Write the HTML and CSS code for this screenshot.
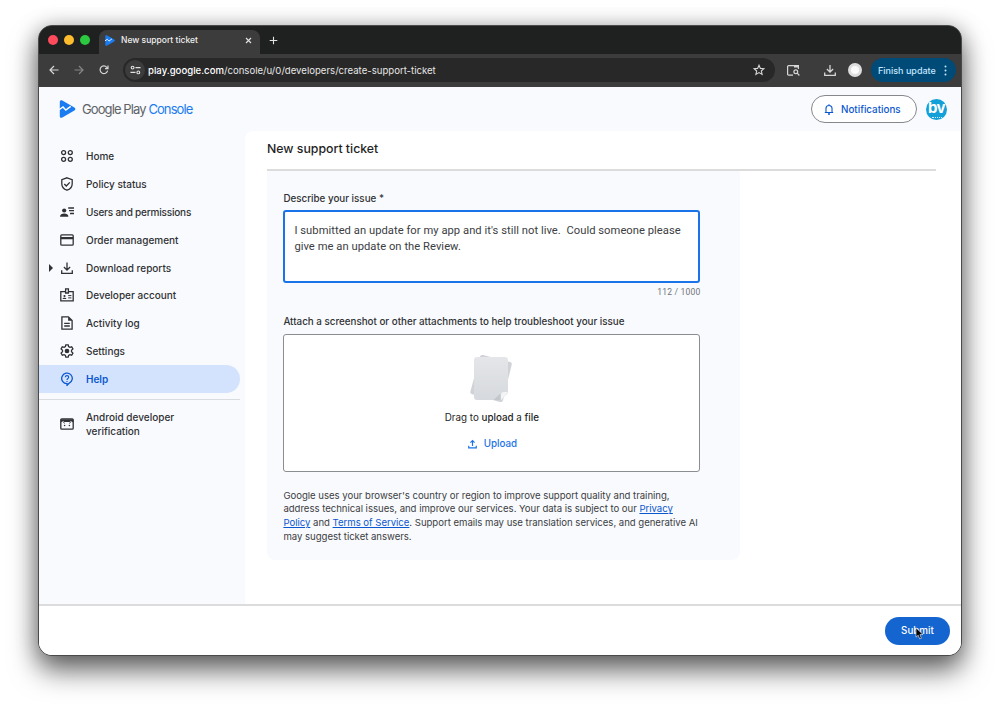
FILE: index.html
```html
<!DOCTYPE html>
<html lang="en">
<head>
    <meta charset="UTF-8">
    <meta name="viewport" content="width=device-width, initial-scale=1.0">
    <title>New support ticket</title>
    <link rel="stylesheet" href="styles.css">
</head>
<body>
    <!-- shared logo shape -->
    <svg width="0" height="0" class="defs">
        <symbol id="console-logo" viewBox="0 0 16 18">
            <path fill="#1a7cf0" d="M0.3 1.8C.3.4 1.6-.2 2.8.5L14.9 7.4c1.3.8 1.3 2.4 0 3.2L2.8 17.5c-1.2.7-2.5.1-2.5-1.3z"/>
            <path fill="none" stroke="#fff" stroke-width="1.4" d="M-.5 9.8L3.5 7l2.8 3 4.9-3.6"/>
        </symbol>
    </svg>

    <div class="window">
        <div class="tab-strip">
            <div class="lights">
                <span class="light red"></span>
                <span class="light yellow"></span>
                <span class="light green"></span>
            </div>
            <div class="tab">
                <svg class="favicon" width="10" height="11"><use href="#console-logo"/></svg>
                <span class="tab-title">New support ticket</span>
                <svg class="tab-close" width="7" height="7" viewBox="0 0 7 7"><path d="M1 1l5 5M6 1L1 6" stroke="#e3e3e3" stroke-width="1.1"/></svg>
            </div>
            <svg class="new-tab" width="9" height="9" viewBox="0 0 9 9"><path d="M4.5 .7v7.6M.7 4.5h7.6" stroke="#e3e3e3" stroke-width="1.1"/></svg>
        </div>

        <div class="toolbar">
            <div class="nav-buttons">
                <svg width="10" height="10" viewBox="0 0 10 10" fill="none" stroke="#d6d6d6" stroke-width="1.2"><path d="M9.5 5H1.2M5 1L1 5l4 4"/></svg>
                <svg width="10" height="10" viewBox="0 0 10 10" fill="none" stroke="#858585" stroke-width="1.2"><path d="M.5 5h8.3M5 1l4 4-4 4"/></svg>
                <svg width="10" height="10" viewBox="0 0 10 10" fill="none" stroke="#d6d6d6" stroke-width="1.2"><path d="M8.6 5.6A3.8 3.8 0 1 1 7.8 2.3L8.8 3.4M9 .6v3H6"/></svg>
            </div>
            <div class="address">
                <span class="site-info">
                    <svg width="11" height="10" viewBox="0 0 11 10" fill="none" stroke="#e3e3e3" stroke-width="1.1"><circle cx="2.6" cy="2.6" r="1.4"/><path d="M5.5 2.6h5"/><circle cx="8.3" cy="7.4" r="1.4"/><path d="M.5 7.4h5"/></svg>
                </span>
                <span class="url"><b>play.google.com</b>/console/u/0/developers/create-support-ticket</span>
                <svg class="star" width="12" height="12" viewBox="0 0 12 12"><path d="M6 1.2l1.4 3.2 3.5.3-2.6 2.3.8 3.4L6 8.6l-3.1 1.8.8-3.4L1.1 4.7l3.5-.3z" fill="none" stroke="#d6d6d6" stroke-width="1.1"/></svg>
            </div>
            <svg class="tab-search" width="13" height="11" viewBox="0 0 13 11" fill="none" stroke="#d6d6d6" stroke-width="1.2"><path d="M6 10.2H1.6a1 1 0 0 1-1-1V1.6a1 1 0 0 1 1-1H11.4V4"/><path d="M7 1.5h4.5" stroke-width="2"/><circle cx="8.8" cy="6.7" r="1.9"/><path d="M10.2 8.2l2.2 2.3"/></svg>
            <span class="sep"></span>
            <svg class="download" width="12" height="11" viewBox="0 0 12 11" fill="none" stroke="#d6d6d6" stroke-width="1.3"><path d="M6 0v6.8M2.9 4L6 7.1 9.1 4M.7 7.5v2.8h10.6V7.5"/></svg>
            <span class="profile"></span>
            <div class="update">
                <span>Finish update</span>
                <svg width="3" height="11" viewBox="0 0 3 11" fill="#c2e7ff"><circle cx="1.5" cy="1.5" r="1"/><circle cx="1.5" cy="5.5" r="1"/><circle cx="1.5" cy="9.5" r="1"/></svg>
            </div>
        </div>

        <div class="app">
            <header class="app-header">
                <svg width="17" height="18"><use href="#console-logo"/></svg>
                <span class="brand">Google Play <em>Console</em></span>
                <button class="notifications">
                    <svg width="10" height="11" viewBox="0 0 10 12" fill="none" stroke="#0b57d0" stroke-width="1.2"><path d="M.4 9.3h9.2M1.7 9V5a3.3 3.3 0 0 1 6.6 0v4M5 .3v1.6"/><path d="M3.9 10.9h2.2" stroke-width="1.4"/></svg>
                    Notifications
                </button>
                <span class="avatar">bv<small></small></span>
            </header>

            <div class="body">
                <nav class="sidebar">
                    <a class="item">
                        <svg width="14" height="14" viewBox="0 0 14 14"><circle cx="3.6" cy="3.6" r="2"/><circle cx="10.3" cy="3.6" r="2"/><circle cx="3.6" cy="10.3" r="2"/><circle cx="10.3" cy="10.3" r="2"/></svg>
                        <span>Home</span>
                    </a>
                    <a class="item">
                        <svg width="14" height="14" viewBox="0 0 14 14"><path d="M7 .8l5.2 1.9v4c0 3-2.2 5.5-5.2 6.5-3-1-5.2-3.5-5.2-6.5v-4zM4.3 7l2 2 3.5-3.6"/></svg>
                        <span>Policy status</span>
                    </a>
                    <a class="item">
                        <svg width="14" height="14" viewBox="0 0 14 14"><path d="M0 11.8c0-2.3 2-3.2 4.2-3.2s4.2.9 4.2 3.2z" fill="#303134" stroke="none"/><circle cx="4.2" cy="5.5" r="2.1" fill="#303134" stroke="none"/><path d="M8.2 3H14M9 5.7h5M10 8.5h4"/></svg>
                        <span class="snug">Users and permissions</span>
                    </a>
                    <a class="item">
                        <svg width="14" height="14" viewBox="0 0 14 14"><rect x=".8" y="1.8" width="12.4" height="10.4" rx="1"/><path d="M.8 5.1h12.4" stroke-width="2.4"/></svg>
                        <span>Order management</span>
                    </a>
                    <a class="item expandable">
                        <svg width="14" height="14" viewBox="0 0 14 14"><path d="M7 1.4v7.2M3.9 6L7 9.1 10.1 6M1.7 9.3v3h10.6v-3"/></svg>
                        <span>Download reports</span>
                    </a>
                    <a class="item">
                        <svg width="14" height="14" viewBox="0 0 14 14"><path d="M5.5 3.6H.8v9.3h12.4V3.6H8.5M5.6 5V.8h2.8V5z"/><path d="M2.6 10.9c0-1.6 3.8-1.6 3.8 0z" fill="#303134" stroke="none"/><circle cx="4.5" cy="8" r="1.1" fill="#303134" stroke="none"/><path d="M8.2 7.6h3.2M8.2 9.9h3.2" stroke-width="1"/></svg>
                        <span>Developer account</span>
                    </a>
                    <a class="item">
                        <svg width="14" height="14" viewBox="0 0 14 14"><path d="M1.9.8h6.5l3.7 3.7v8.7H1.9zM4.2 7.3h5.6M4.2 10h5.6"/><path d="M8.1.8v4h4z" fill="#303134" stroke="none"/></svg>
                        <span>Activity log</span>
                    </a>
                    <a class="item">
                        <svg width="14" height="14" viewBox="0 0 14 14"><path d="M5.8.8h2.4l.4 1.8 1.3.8 1.8-.6 1.2 2.1-1.4 1.3v1.6l1.4 1.3-1.2 2.1-1.8-.6-1.3.8-.4 1.8H5.8l-.4-1.8-1.3-.8-1.8.6-1.2-2.1 1.4-1.3V6.2L1.1 4.9l1.2-2.1 1.8.6 1.3-.8z"/><circle cx="7" cy="7" r="1.7" fill="#303134"/></svg>
                        <span>Settings</span>
                    </a>
                    <a class="item active">
                        <svg width="14" height="14" viewBox="0 0 14 14"><path d="M7 11.7a5.3 5.3 0 1 1 2-.4L7 13.4z"/><path d="M5.3 5.2c0-2.1 3.4-2.1 3.4 0C8.7 6.5 7 6.5 7 8M7 8.9v1.2" stroke-width="1.1"/></svg>
                        <span>Help</span>
                    </a>
                    <hr class="divider">
                    <a class="item tall">
                        <svg width="14" height="14" viewBox="0 0 14 14"><rect x=".8" y="1.8" width="12.4" height="10.4" rx="1"/><path d="M.8 2.2h12.4v3.2L10.8 4.1 9.7 4.9H4.3L3.2 4.1.8 5.4z" fill="#303134" stroke="none"/><path d="M4.5 6.5L3.2 4.6M9.5 6.5l1.3-1.9" stroke-width=".9"/><circle cx="4.6" cy="8.5" r=".8" fill="#303134" stroke="none"/><circle cx="9.4" cy="8.5" r=".8" fill="#303134" stroke="none"/></svg>
                        <span>Android developer<br>verification</span>
                    </a>
                </nav>

                <main class="main">
                    <h1 class="page-title">New support ticket</h1>
                    <section class="card">
                        <p class="label">Describe your issue *</p>
                        <div class="textbox">I submitted an update for my app and it's still not live.&nbsp; Could someone please<br>give me an update on the Review.</div>
                        <p class="counter">112 / 1000</p>
                        <p class="label label-attach">Attach a screenshot or other attachments to help troubleshoot your issue</p>
                        <div class="dropzone">
                            <svg width="44" height="50" viewBox="0 0 44 50">
                                <defs>
                                    <linearGradient id="paper" x1="0" y1="0" x2="0" y2="1"><stop offset="0" stop-color="#e4e6e9"/><stop offset="1" stop-color="#d6d9dd"/></linearGradient>
                                </defs>
                                <path d="M14 1l27 7c1.5.4 2 1.4 1.7 2.7L34 46c-.4 1.7-1.5 2.3-3 2L4 40.5C1.5 40 1 39 1.4 37.5L10.8 3c.4-1.5 1.500-2.300 3.200-2z" fill="#cfd2d6"/>
                                <path d="M8 3h28c2 0 3 1 3 3v33l-7.5 7H8c-2 0-3-1-3-3V6c0-2 1-3 3-3z" fill="url(#paper)"/>
                                <path d="M39 38l-7 8.3V41c0-2 1-3 3-3z" fill="#f3f4f5"/>
                                <path d="M31.5 39.5V46h-7z" fill="#c3c7cb"/>
                            </svg>
                            <p class="drag">Drag to <b>upload</b> a <b>file</b></p>
                            <a class="upload">
                                <svg width="9" height="10" viewBox="0 0 10 10" fill="none" stroke="#1a73e8" stroke-width="1.3"><path d="M5 7.2V1.2M2.7 3.4L5 1.1l2.3 2.3M.8 6.9v2.4h8.4V6.9"/></svg>
                                <span>Upload</span>
                            </a>
                        </div>
                        <p class="legal">Google uses your browser's country or region to improve support quality and training,<br>address technical issues, and improve our services. Your data is subject to our <a>Privacy</a><br><a>Policy</a> and <a>Terms of Service</a>. Support emails may use translation services, and generative AI<br>may suggest ticket answers.</p>
                    </section>
                </main>
            </div>

            <footer class="app-footer">
                <button class="submit">Submit
                    <svg class="cursor" width="9" height="13" viewBox="0 0 9 13"><path d="M1 .8v9.4l2.2-2 1.5 3.7 1.7-.7-1.5-3.6H8z" fill="#000" stroke="#fff" stroke-width=".6"/></svg>
                </button>
            </footer>
        </div>
    </div>
</body>
</html>
```
FILE: styles.css
```css
* {
    box-sizing: border-box;
}

body {
    margin: 0;
    padding: 25px 38px 0;
    height: 707px;
    overflow: hidden;
    background: #fff;
    font-family: Inter, "Liberation Sans", sans-serif;
    color: #303134;
    white-space: nowrap;
}

p, h1 {
    margin: 0;
}

svg {
    display: block;
    flex: none;
}

.defs {
    position: absolute;
}

.window {
    width: 924px;
    height: 631px;
    display: flex;
    flex-direction: column;
    border: 1px solid #4a4a4a;
    border-radius: 14px;
    overflow: hidden;
    background: #3c3c3c;
    box-shadow: 0 15px 28px rgba(0, 0, 0, 0.55), 0 2px 22px rgba(0, 0, 0, 0.28);
}

/* browser chrome */
.tab-strip {
    height: 28px;
    display: flex;
    align-items: center;
    padding-left: 9px;
    background: #1f2020;
}

.lights {
    display: flex;
    gap: 6px;
    width: 51px;
}

.light {
    width: 10px;
    height: 10px;
    border-radius: 50%;
}

.red { background: #ff4b5c; }
.yellow { background: #fdbc2e; }
.green { background: #2bc840; }

.tab {
    align-self: flex-end;
    width: 161px;
    height: 24px;
    display: flex;
    align-items: center;
    padding: 0 8px 4px 6px;
    border-radius: 8px 8px 0 0;
    background: #3c3c3c;
}

.tab-title {
    margin-left: 6px;
    flex: 1;
    font-size: 8.5px;
    font-weight: 500;
    color: #eee;
}

.new-tab {
    margin-left: 9px;
    margin-top: 1px;
}

.toolbar {
    height: 33px;
    display: flex;
    align-items: center;
    padding: 0 5px 1px 10px;
    background: #3c3c3c;
}

.nav-buttons {
    display: flex;
    gap: 15px;
    width: 74px;
    flex: none;
}

.address {
    width: 652px;
    flex: none;
    height: 24px;
    display: flex;
    align-items: center;
    padding: 0 10px 0 2px;
    border-radius: 12px;
    background: #282828;
}

.site-info {
    width: 20px;
    height: 20px;
    display: flex;
    align-items: center;
    justify-content: center;
    border-radius: 50%;
    background: #3c3c3c;
}

.url {
    flex: 1;
    margin-left: 3px;
    font-size: 9.6px;
    color: #e6e6e6;
}

.url b {
    font-weight: 500;
    color: #fff;
}

.tab-search {
    margin-left: 12px;
}

.sep {
    width: 1px;
    height: 11px;
    margin: 0 12px;
    background: #666;
}

.profile {
    width: 14px;
    height: 14px;
    flex: none;
    margin: 0 9px 0 12px;
    border: 3px solid #ddd;
    border-radius: 50%;
    background: #fafafa;
}

.update {
    width: 85px;
    flex: none;
    height: 24px;
    display: flex;
    align-items: center;
    justify-content: space-between;
    padding: 0 9px 0 7px;
    border-radius: 12px;
    background: #004a77;
    font-size: 9px;
    font-weight: 500;
    color: #c2e7ff;
}

/* page */
.app {
    flex: 1;
    display: flex;
    flex-direction: column;
    background: #f8fafd;
}

.app-header {
    height: 44px;
    display: flex;
    align-items: center;
    padding: 0 14px 0 20px;
}

.brand {
    flex: 1;
    margin-left: 6px;
    font-size: 13px;
    letter-spacing: -0.9px;
    color: #5f6368;
}

.brand em {
    font-style: normal;
    color: #1a7cf0;
}

.notifications {
    width: 106px;
    height: 28px;
    display: flex;
    align-items: center;
    gap: 7px;
    padding: 0 0 0 12px;
    border: 1px solid #85888c;
    border-radius: 14px;
    background: #fff;
    font-family: inherit;
    font-size: 9.8px;
    font-weight: 500;
    color: #0b57d0;
}

.avatar {
    width: 21px;
    height: 21px;
    display: flex;
    flex-direction: column;
    align-items: center;
    margin-left: 9px;
    border-radius: 50%;
    background: #12a0d8;
    font-size: 15px;
    font-weight: 700;
    line-height: 18px;
    letter-spacing: -0.5px;
    color: #fff;
}

.avatar small {
    width: 10px;
    border-top: 1px dotted #d5eff9;
}

.body {
    height: 473px;
    display: flex;
}

.sidebar {
    width: 206px;
    padding-top: 11.6px;
}

.item {
    position: relative;
    width: 201px;
    height: 27.8px;
    display: flex;
    align-items: center;
    gap: 12px;
    padding-left: 21px;
    font-size: 10px;
    font-weight: 500;
    line-height: 14px;
}

.item svg {
    fill: none;
    stroke: #303134;
    stroke-width: 1.3;
}

.snug {
    letter-spacing: -0.2px;
}

.expandable::before {
    content: "";
    position: absolute;
    left: 10px;
    top: 10px;
    border: 4px solid transparent;
    border-left-color: #303134;
    border-right-width: 0;
}

.active {
    border-radius: 0 14px 14px 0;
    background: #d3e3fd;
    font-weight: 600;
    color: #0b57d0;
}

.active svg {
    stroke: #0b57d0;
}

.divider {
    width: 201px;
    height: 1px;
    margin: 6px 0 10px;
    border: 0;
    background: #dadce0;
}

.tall {
    height: 28px;
}

.main {
    flex: 1;
    padding: 0 25px 0 22px;
    border-top-left-radius: 8px;
    background: #fff;
}

.page-title {
    height: 40px;
    padding-top: 9px;
    border-bottom: 2px solid #dcdcdc;
    font-size: 12.3px;
    font-weight: 500;
    line-height: 18px;
    color: #1f1f1f;
}

.card {
    width: 473px;
    height: 389px;
    padding: 20.5px 16.4px 0;
    border-radius: 0 0 8px 8px;
    background: #f8fafd;
}

.label {
    font-size: 9.8px;
    font-weight: 500;
    line-height: 14px;
}

.textbox {
    width: 417px;
    height: 73px;
    margin-top: 4.9px;
    padding: 10.6px 9px;
    border: 2px solid #1a73e8;
    border-radius: 3px;
    background: #fff;
    font-family: Roboto, sans-serif;
    font-size: 11.2px;
    line-height: 16.5px;
    letter-spacing: 0.04px;
    color: #3c4043;
}

.counter {
    width: 417px;
    margin-top: 2.6px;
    font-family: Roboto, sans-serif;
    font-size: 8.5px;
    line-height: 13px;
    letter-spacing: 0.2px;
    text-align: right;
    color: #6f7378;
}

.label-attach {
    margin-top: 16px;
}

.dropzone {
    width: 417px;
    height: 138px;
    display: flex;
    flex-direction: column;
    align-items: center;
    margin-top: 4.6px;
    padding-top: 19px;
    border: 1px solid #8a8d91;
    border-radius: 3px;
    background: #fff;
}

.dropzone > svg {
    margin-right: 1px;
}

.drag {
    margin-top: 7px;
    font-size: 9.8px;
    line-height: 14px;
    color: #1f1f1f;
}

.drag b {
    font-weight: 500;
}

.upload {
    display: flex;
    align-items: center;
    gap: 7px;
    margin: 12.5px 0 0 1px;
    font-size: 9.8px;
    font-weight: 500;
    line-height: 14px;
    color: #1a73e8;
}

.legal {
    margin-top: 17px;
    font-size: 9.6px;
    line-height: 13.9px;
    letter-spacing: -0.03px;
    color: #3c4043;
}

.legal a {
    color: #0b57d0;
    text-decoration: underline;
}

.app-footer {
    flex: 1;
    display: flex;
    justify-content: flex-end;
    padding: 10.5px 11px 0 0;
    border-top: 2px solid #dcdcdc;
    background: #fff;
}

.submit {
    position: relative;
    width: 65px;
    height: 28px;
    padding: 0;
    border: 0;
    border-radius: 14px;
    background: #1565d0;
    font-family: inherit;
    font-size: 9.8px;
    font-weight: 500;
    color: #fff;
}

/* mouse pointer over the button */
.cursor {
    position: absolute;
    left: 30px;
    top: 10px;
}
```
